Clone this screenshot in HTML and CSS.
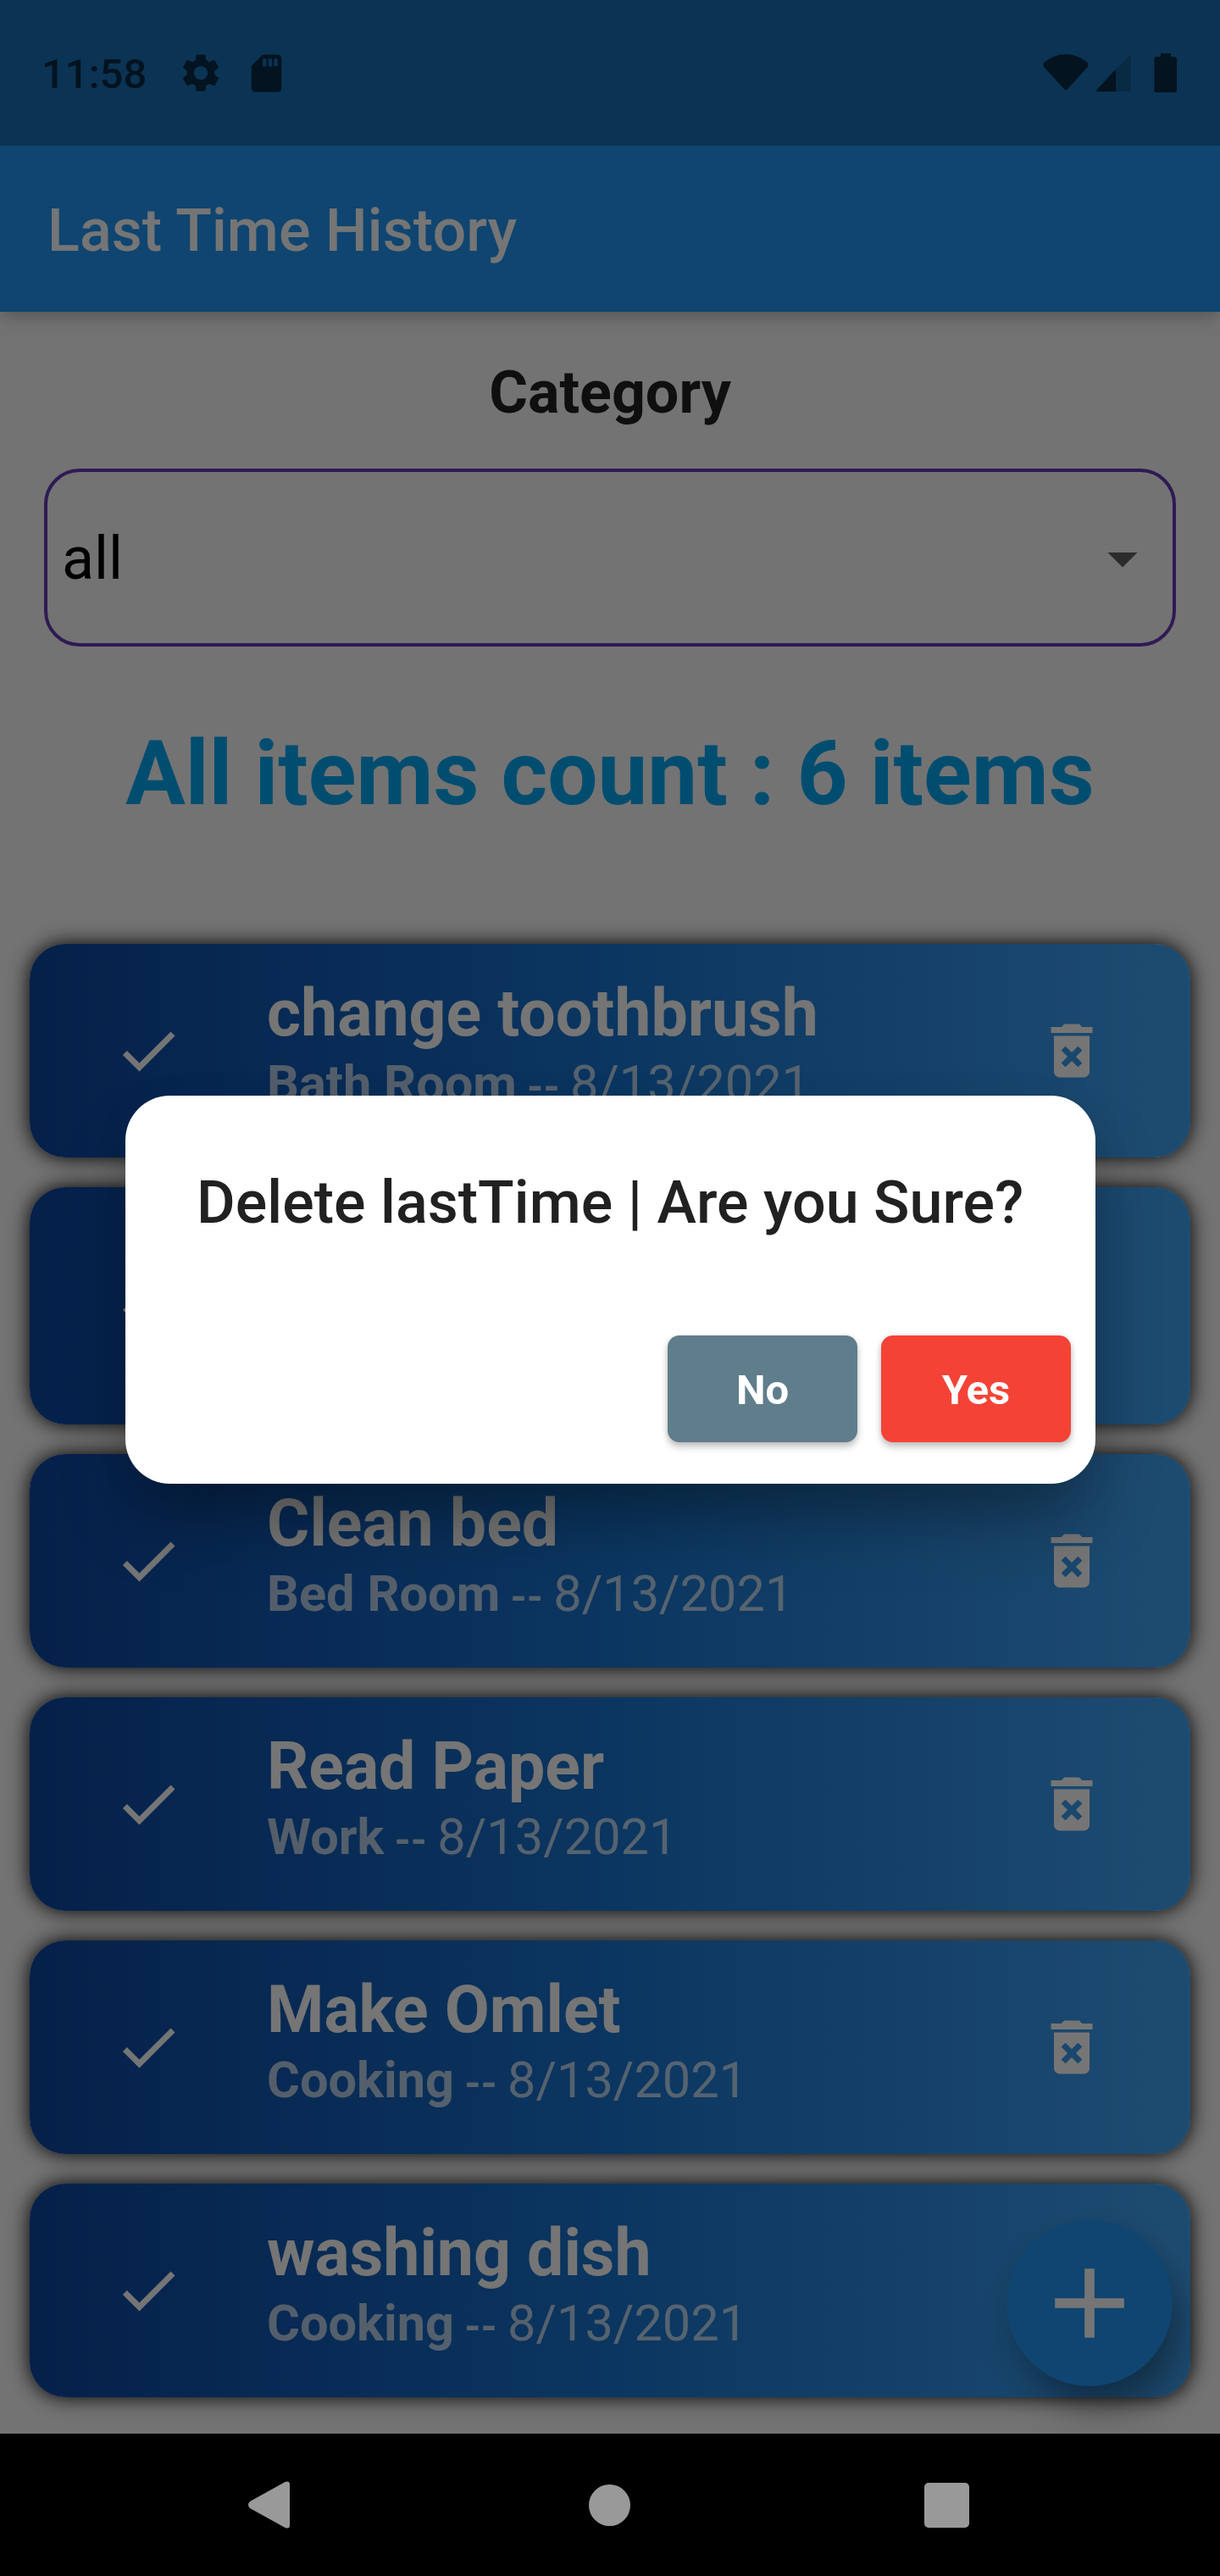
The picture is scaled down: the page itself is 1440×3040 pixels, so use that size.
FILE: index.html
```html
<!DOCTYPE html>
<html lang="en">
<head>
<meta charset="utf-8">
<title>Last Time History</title>
<link rel="stylesheet" href="styles.css">
</head>
<body>
<svg class="sprite" aria-hidden="true">
  <symbol id="check" viewBox="0 0 24 24"><path d="M9 16.17 4.83 12l-1.42 1.41L9 19 21 7l-1.41-1.41z"/></symbol>
  <symbol id="delete" viewBox="0 0 24 24"><path d="M6 19c0 1.1.9 2 2 2h8c1.1 0 2-.9 2-2V7H6v12zm2.46-7.12 1.41-1.41L12 12.59l2.12-2.12 1.41 1.41L13.41 14l2.12 2.12-1.41 1.41L12 15.41l-2.12 2.12-1.41-1.41L10.59 14l-2.13-2.12zM15.5 4l-1-1h-5l-1 1H5v2h14V4h-3.5z"/></symbol>
</svg>
<div class="phone">
  <header class="status">
    <span class="clock">11:58</span>
    <svg class="gear" viewBox="0 0 24 24"><path d="M19.14 12.94c.04-.3.06-.61.06-.94 0-.32-.02-.64-.07-.94l2.03-1.58c.18-.14.23-.41.12-.61l-1.92-3.32c-.12-.22-.37-.29-.59-.22l-2.39.96c-.5-.38-1.03-.7-1.62-.94l-.36-2.54c-.04-.24-.24-.41-.48-.41h-3.84c-.24 0-.43.17-.47.41l-.36 2.54c-.59.24-1.13.57-1.62.94l-2.39-.96c-.22-.08-.47 0-.59.22L2.74 8.87c-.12.21-.08.47.12.61l2.03 1.58c-.05.3-.09.63-.09.94s.02.64.07.94l-2.03 1.58c-.18.14-.23.41-.12.61l1.92 3.32c.12.22.37.29.59.22l2.39-.96c.5.38 1.03.7 1.62.94l.36 2.54c.05.24.24.41.48.41h3.84c.24 0 .44-.17.47-.41l.36-2.54c.59-.24 1.13-.56 1.62-.94l2.39.96c.22.08.47 0 .59-.22l1.92-3.32c.12-.22.07-.47-.12-.61l-2.01-1.58zM12 15.6c-1.98 0-3.6-1.62-3.6-3.6s1.62-3.6 3.6-3.6 3.6 1.62 3.6 3.6-1.62 3.6-3.6 3.6z"/></svg>
    <svg class="sd" viewBox="0 0 24 24"><path d="M18 2h-8L4.02 8 4 20c0 1.1.9 2 2 2h12c1.1 0 2-.9 2-2V4c0-1.1-.9-2-2-2zm-6 6.3h-2V4.2h2v4.1zm3 0h-2V4.2h2v4.1zm3 0h-2V4.2h2v4.1z"/></svg>
    <svg class="radio" viewBox="0 0 160 48">
      <path d="M1.2 16Q-.8 13 1.8 10.500Q13 1 27 1T52.200 10.500Q54.500 13 52.800 16L29 42Q27 44.500 25 42Z"/>
      <path class="faint" d="M64.500 42 101 4Q104 2 104 5.500V43Q104 45 102 45H65.500Q61 45 64.500 42Z"/>
      <path d="M64.500 42 86 18.500V45H65.500Q61 45 64.500 42Z"/>
      <path d="M139 0H151V4H155.500Q158 4 158 6.500V43.500Q158 46 155.500 46H134Q131.500 46 131.500 43.500V6.500Q131.500 4 134 4H139Z"/>
    </svg>
  </header>
  <div class="app-bar">Last Time History</div>
  <main class="content">
    <h2 class="label">Category</h2>
    <div class="select"><span>all</span><svg viewBox="0 0 24 24"><path d="m7 10 5 5 5-5z"/></svg></div>
    <h1 class="count">All items count : 6 items</h1>
    <ul class="list">
      <li class="card"><svg><use href="#check"/></svg><div class="text"><p class="name">change toothbrush</p><p class="meta"><b>Bath Room</b><b class="dash"> -- </b>8/13/2021</p></div><svg><use href="#delete"/></svg></li>
      <li class="card tall"><svg><use href="#check"/></svg></li>
      <li class="card"><svg><use href="#check"/></svg><div class="text"><p class="name">Clean bed</p><p class="meta"><b>Bed Room</b><b class="dash"> -- </b>8/13/2021</p></div><svg><use href="#delete"/></svg></li>
      <li class="card"><svg><use href="#check"/></svg><div class="text"><p class="name">Read Paper</p><p class="meta"><b>Work</b><b class="dash"> -- </b>8/13/2021</p></div><svg><use href="#delete"/></svg></li>
      <li class="card"><svg><use href="#check"/></svg><div class="text"><p class="name">Make Omlet</p><p class="meta"><b>Cooking</b><b class="dash"> -- </b>8/13/2021</p></div><svg><use href="#delete"/></svg></li>
      <li class="card"><svg><use href="#check"/></svg><div class="text"><p class="name">washing dish</p><p class="meta"><b>Cooking</b><b class="dash"> -- </b>8/13/2021</p></div></li>
    </ul>
    <div class="fab"><svg viewBox="0 0 24 24"><path d="M19 13h-6v6h-2v-6H5v-2h6V5h2v6h6v2z"/></svg></div>
  </main>
  <nav class="nav">
    <svg class="back" viewBox="0 0 49 56"><path d="M2 24 43.500 1Q49 -1 49 4V52Q49 57 43.500 55L2 32Q-2 28 2 24Z"/></svg>
    <svg class="home" viewBox="0 0 49 49"><circle cx="24.500" cy="24.500" r="24.500"/></svg>
    <svg class="recent" viewBox="0 0 53 53"><rect width="53" height="53" rx="5"/></svg>
  </nav>
  <div class="barrier">
    <div class="dialog">
      <p class="question">Delete lastTime | Are you Sure?</p>
      <div class="actions"><button class="no">No</button><button class="yes">Yes</button></div>
    </div>
  </div>
</div>
</body>
</html>
```
FILE: styles.css
```css
* { box-sizing: border-box; margin: 0; padding: 0; }
body { font-family: Roboto, "Liberation Sans", sans-serif; background: #000; }
svg { display: block; fill: currentColor; flex: none; }
.sprite { position: absolute; width: 0; height: 0; }
.phone { position: relative; width: 1440px; height: 3040px; overflow: hidden; display: flex; flex-direction: column; }

/* system status bar */
.status { position: relative; z-index: 3; height: 172px; flex: none; background: #0b3353; color: #03131f; display: flex; align-items: center; padding: 0 49px; }
.clock { font-size: 49px; font-weight: 500; line-height: 58px; width: 161px; margin-top: 4px; }
.gear { width: 54px; height: 54px; }
.sd { width: 53px; height: 53px; margin-left: 24px; }
.radio { width: 160px; height: 48px; margin-left: auto; margin-top: 2px; }
.faint { fill: #082a43; }

.app-bar { position: relative; z-index: 1; height: 196px; flex: none; background: #2196f3; color: #fff; font-size: 70px; font-weight: 500; line-height: 201px; padding-left: 56px; letter-spacing: .1px; box-shadow: 0 7px 14px -3px rgba(0,0,0,.16), 0 8px 24px rgba(0,0,0,.12); }
.content { position: relative; height: 2504px; flex: none; overflow: hidden; background: #fafafa; padding: 54px 35px 0; }
.label { font-size: 70px; line-height: 82px; text-align: center; color: #212121; }
.select { display: flex; align-items: center; justify-content: space-between; height: 210px; margin: 49px 17px 0; padding: 2px 17px 0 17px; border: 4px solid #673ab7; border-radius: 42px; font-size: 70px; line-height: 82px; color: #000; }
.select svg { width: 84px; height: 84px; color: #616161; }
.count { margin-top: 89px; font-size: 105px; line-height: 123px; text-align: center; color: #03a9f4; white-space: nowrap; }
.list { list-style: none; margin-top: 139px; display: flex; flex-direction: column; gap: 35px; }
.card { display: flex; align-items: center; gap: 98px; height: 252px; padding: 0 98px; border-radius: 42px; color: #fff; background: linear-gradient(90deg, #0d47a1, #1976d2 50%, #42a5f5); box-shadow: 0 0 25px #000; }
.card svg { width: 84px; height: 84px; }
.tall { height: 280px; }
.text { flex: 1; align-self: flex-start; padding-top: 37px; }
.name { font-size: 77px; font-weight: 700; line-height: 90px; }
.meta { margin-top: 3px; font-size: 59.500px; line-height: 70px; color: rgba(255,255,255,.7); white-space: nowrap; }
.dash { font-size: 49px; line-height: 1; }
.fab { position: absolute; right: 56px; bottom: 56px; width: 196px; height: 196px; border-radius: 50%; background: #2196f3; color: #fff; display: grid; place-items: center; box-shadow: 14px 30px 48px -6px rgba(0,0,0,.38), 0 3px 30px rgba(0,0,0,.04); }
.fab svg { width: 140px; height: 140px; }

.nav { position: relative; z-index: 3; height: 168px; flex: none; display: flex; align-items: center; background: #000; color: #999; padding-left: 293px; }
.back { width: 49px; height: 56px; }
.home { width: 49px; height: 49px; margin-left: 353px; }
.recent { width: 53px; height: 53px; margin-left: 347px; }

/* modal layer */
.barrier { position: absolute; inset: 0; z-index: 2; display: flex; align-items: flex-start; justify-content: center; padding-top: 1292.500px; background: rgba(0,0,0,.54); }
.dialog { width: 1145px; height: 458.500px; padding: 85px 28.500px 49px 84.500px; display: flex; flex-direction: column; justify-content: space-between; border-radius: 52.500px; background: #fff; box-shadow: 0 50px 85px -14px rgba(0,0,0,.36), 0 10px 50px rgba(0,0,0,.05); }
.question { font-size: 70px; font-weight: 500; line-height: 82px; letter-spacing: .04px; color: #212121; white-space: nowrap; }
.actions { display: flex; justify-content: flex-end; gap: 28px; }
.actions button { width: 224px; height: 126px; padding-top: 3px; border: 0; border-radius: 14px; color: #fff; font: 700 49px/58px Roboto, sans-serif; box-shadow: 0 6px 8px rgba(0,0,0,.2), 0 1px 6px rgba(0,0,0,.12); }
.no { background: #607d8b; }
.yes { background: #f44336; }
```
